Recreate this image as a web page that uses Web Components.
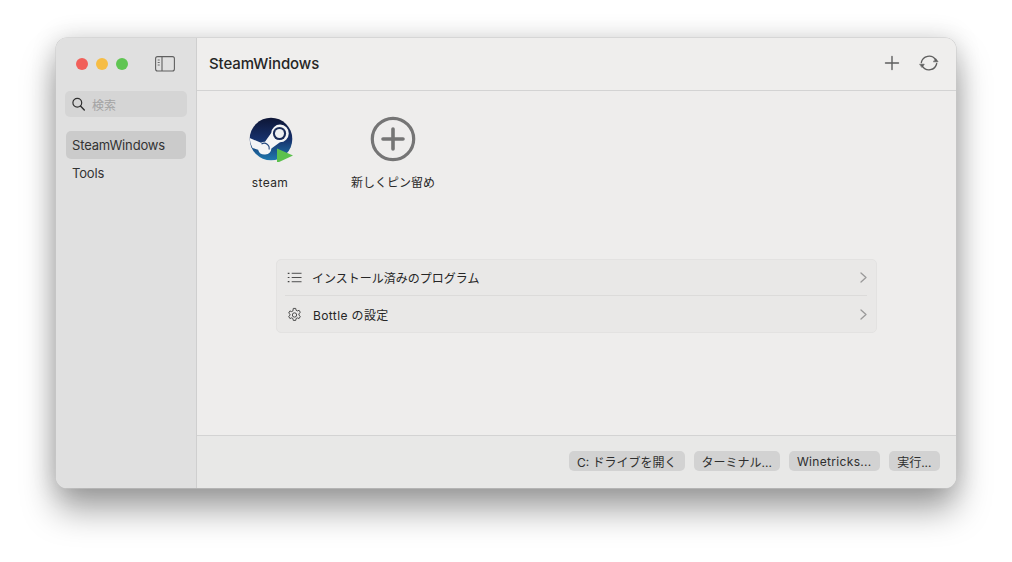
<!DOCTYPE html>
<html lang="ja"><head><meta charset="utf-8">
<style>
html,body{margin:0;height:100%;background:#fff}
body{width:1012px;height:562px;overflow:hidden;box-sizing:border-box;padding:38px 56px 74px;font:13px Inter,"Noto Sans CJK JP",sans-serif;color:#262626}
</style></head><body>
<app-window>
  <app-sidebar slot="sidebar">
    <side-item selected>SteamWindows</side-item>
    <side-item>Tools</side-item>
  </app-sidebar>
  <app-toolbar slot="toolbar">SteamWindows</app-toolbar>
  <pin-grid>
    <pin-item label="steam" style="letter-spacing:.35px"><svg viewBox="0 0 46 46" width="46" height="46">
      <defs><linearGradient id="g" x1="0" y1="0" x2="0" y2="1"><stop offset="0" stop-color="#0e1636"/><stop offset=".5" stop-color="#16306a"/><stop offset="1" stop-color="#1f78ae"/></linearGradient></defs>
      <circle cx="24" cy="23" r="21.300" fill="url(#g)"/>
      <path d="M2.700 22 14 26.800a6.500 6.500 0 0 1 4-1.100l6.200-8.800a8.800 8.800 0 1 1 8.800 9.300l-8.600 6.200a6.800 6.800 0 0 1-13.300 1.300L5.500 32A21 21 0 0 1 2.700 22Z" fill="#f4f5f6"/>
      <circle cx="32.500" cy="17.500" r="6.600" fill="#1a2c58"/><circle cx="32.500" cy="17.500" r="4.500" fill="#eef0f2"/>
      <path d="M14.500 28a5 5 0 0 1 7.500 5.500" fill="none" stroke="#23487e" stroke-width="1.100"/>
      <path d="M30 32.500 46 39.500 30 47Z" fill="#5cc14e"/>
    </svg></pin-item>
    <pin-item label="新しくピン留め"><svg viewBox="0 0 46 46" width="46" height="46">
      <circle cx="23" cy="23" r="20.700" fill="none" stroke="#757575" stroke-width="3.200"/>
      <path d="M13 23h20M23 13v20" fill="none" stroke="#757575" stroke-width="3.600" stroke-linecap="round"/>
    </svg></pin-item>
  </pin-grid>
  <nav-list>
    <nav-row label="インストール済みのプログラム"><svg slot="icon" viewBox="0 0 16 16" width="15" height="15" fill="none" stroke="#444" stroke-width="1"><path d="M5 3.500h10.500M5 8h10.500M5 12.500h10.500"/><path d="M.8 3.500h1.800M.8 8h1.800M.8 12.500h1.800" stroke-width="1.300"/></svg></nav-row>
    <nav-row label="Bottle の設定" spaced><svg slot="icon" viewBox="0 0 16 16" width="15" height="15" fill="none" stroke="#444" stroke-width="1"><circle cx="8" cy="8.500" r="2.300"/><path d="M6.700 1.500h2.600l.4 2 1.300.7 1.900-.7 1.300 2.300-1.500 1.300v1.600l1.500 1.300-1.300 2.300-1.900-.7-1.300.7-.4 2H6.700l-.4-2-1.300-.7-1.900.7-1.300-2.300 1.500-1.300V7.800L1.800 6.500l1.300-2.300 1.900.7 1.300-.7Z" stroke-linejoin="round"/></svg></nav-row>
  </nav-list>
  <app-footer slot="footer">
    <pill-button>C: ドライブを開く</pill-button>
    <pill-button>ターミナル...</pill-button>
    <pill-button style="letter-spacing:.32px">Winetricks...</pill-button>
    <pill-button style="padding:0 8.500px">実行...</pill-button>
  </app-footer>
</app-window>
<script>
function def(name, html, init){
  customElements.define(name, class extends HTMLElement{
    constructor(){super();this.attachShadow({mode:'open'}).innerHTML=typeof html==='function'?html(this):html;}
    connectedCallback(){ if(init) init(this); }
  });
}
def('app-window',`<style>
:host{display:grid;grid-template-columns:140px 1fr;width:900px;height:450px;border-radius:11px;overflow:visible;box-shadow:0 0 0 .5px #c9c9c9,0 22px 34px rgba(0,0,0,.36),0 0 26px rgba(0,0,0,.16);background:#eeedec}
.side{border-radius:11px 0 0 11px;overflow:hidden;display:flex}
.main{display:flex;flex-direction:column;min-width:0;border-left:1px solid #cfcfcf;border-radius:0 11px 11px 0;overflow:hidden}
.body{flex:1;min-height:0;display:flex;flex-direction:column;background:#eeedec}
</style><div class="side"><slot name="sidebar"></slot></div>
<div class="main"><slot name="toolbar"></slot><div class="body"><slot></slot></div><slot name="footer"></slot></div>`);
def('app-sidebar',`<style>
:host{display:flex;flex-direction:column;flex:1;background:#e0e0e0;padding:0 10px 0 9px;box-sizing:border-box;color:#2a2a2a}
.top{height:51px;display:flex;align-items:center;padding-left:11px}
.tl{width:12px;height:12px;border-radius:50%;margin-right:8px}
.tg{margin-left:19px;display:block}
.search{margin-top:2px;height:26px;width:122px;background:#d5d5d5;border-radius:5px;display:flex;align-items:center;gap:7px;padding-left:7px;box-sizing:border-box;color:#a3a3a3;font-size:12px}
.list{margin:14px 0 0 1px;display:flex;flex-direction:column}
</style>
<div class="top"><span class="tl" style="background:#f1605a"></span><span class="tl" style="background:#f6bd44"></span><span class="tl" style="background:#5fc552"></span>
<svg class="tg" width="20" height="16" viewBox="0 0 20 16" fill="none" stroke="#5f5f5f" stroke-width="1.100"><rect x=".6" y=".6" width="18.800" height="14.400" rx="2"/><path d="M7 .6v14.400"/><path d="M2.700 4h2M2.700 6.500h2M2.700 9h2" stroke-width=".9"/></svg></div>
<div class="search"><svg width="13" height="14" viewBox="0 0 13 14" fill="none" stroke="#303030" stroke-width="1.200"><circle cx="5.300" cy="5.700" r="4.400"/><path d="M8.500 9l3.800 4" stroke-linecap="round" stroke-width="1.400"/></svg><span>検索</span></div>
<div class="list"><slot></slot></div>`);
def('side-item',`<style>
:host{display:flex;align-items:center;height:28px;width:120px;padding-left:6px;box-sizing:border-box;border-radius:5px;font-size:13px;color:#333;letter-spacing:-.15px}
:host([selected]){background:#cbcbcb}
</style><slot></slot>`);
def('app-toolbar',`<style>
:host{display:flex;align-items:center;height:53px;flex:none;box-sizing:border-box;border-bottom:1px solid #d3d3d3;background:#efeeed;padding:0 17px 2px 12px;font-size:15px;font-weight:500;color:#262626;letter-spacing:-.08px}
.sp{flex:1}.ic{display:block}
</style><slot></slot><span class="sp"></span>
<svg class="ic" width="18" height="18" viewBox="0 0 18 18" fill="none" stroke="#5e5e5e" stroke-width="1.400" stroke-linecap="round"><path d="M9 2.500v13M2.500 9h13"/></svg>
<svg class="ic" style="margin-left:18px" width="20" height="18" viewBox="0 0 20 18" fill="none" stroke="#5e5e5e" stroke-width="1.300" stroke-linecap="round"><path d="M2.300 8.500A7.900 7.900 0 0 1 16.700 5.800"/><path d="M17.700 9.500A7.900 7.900 0 0 1 3.300 12.200"/><path d="M14.700 7.800h4.400l-2.200-3Z M.9 10.200h4.400l-2.200 3Z" fill="#5e5e5e" stroke-width=".6" stroke-linejoin="round"/></svg>`);
def('pin-grid',`<style>:host{display:flex;padding:25px 0 0 12px;gap:1px}</style><slot></slot>`);
def('pin-item',el=>`<style>
:host{display:flex;flex-direction:column;align-items:center;width:122px;flex:none;font-size:12px;color:#2a2a2a}
.l{margin-top:12px;line-height:18px;white-space:nowrap}
</style><slot></slot><div class="l">${el.getAttribute('label')}</div>`);
def('nav-list',`<style>
:host{display:block;margin:67px 79px 0 79px;border:1px solid #e3e2e1;border-radius:5px;background:#e9e8e7}
::slotted(nav-row:not(:last-child)){--sep:1px solid #dcdbda}
</style><slot></slot>`);
def('nav-row',el=>`<style>
:host{display:block;padding:0 9px 0 8px}
:host([spaced]) .t{letter-spacing:.38px;padding-left:1px}
.r{height:36px;display:flex;align-items:center;gap:10px;padding-left:2px;box-sizing:border-box;border-bottom:var(--sep,none);font-size:12px;color:#262626}
.t{flex:1}
</style><div class="r"><slot name="icon"></slot><span class="t">${el.getAttribute('label')}</span>
<svg width="7" height="11" viewBox="0 0 7 11" fill="none" stroke="#9a9a9a" stroke-width="1.300" stroke-linecap="round" stroke-linejoin="round"><path d="M1 1l5 4.500-5 4.500"/></svg></div>`);
def('app-footer',`<style>
:host{display:flex;justify-content:flex-end;align-items:center;gap:9px;flex:none;height:53px;box-sizing:border-box;border-top:1px solid #d3d3d3;background:#e8e8e7;padding:0 16px 2px 0}
</style><slot></slot>`);
def('pill-button',`<style>
:host{display:flex;align-items:center;height:20px;padding:0 8px;background:#d2d2d2;border-radius:5px;font-size:12px;color:#2e2e2e;white-space:nowrap}
</style><slot></slot>`);
</script>
</body></html>
